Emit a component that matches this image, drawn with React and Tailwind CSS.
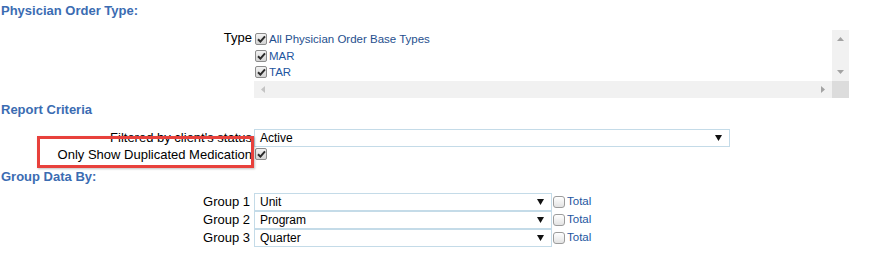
import React from "react";

function CheckBox({ checked }) {
  return checked ? (
    <span className="inline-flex h-[12px] w-[12px] shrink-0 items-center justify-center rounded-[2px] border border-[#8c8c8c] bg-gradient-to-b from-[#f2f2f2] to-[#d4d4d4]">
      <svg width="9" height="8" viewBox="0 0 9 8">
        <path d="M1 4.2 L3.4 6.6 L8 1.4" fill="none" stroke="#2b2b2b" strokeWidth="2" />
      </svg>
    </span>
  ) : (
    <span className="inline-block h-[12px] w-[12px] shrink-0 rounded-[3px] border border-[#9c9c9c] bg-gradient-to-b from-[#ffffff] to-[#e3e3e3]" />
  );
}

function Select({ value, width }) {
  return (
    <div
      className={`flex h-[18px] items-center justify-between border border-[#c4dbe8] bg-white pl-[5px] pr-[7px] text-[12px] text-black ${width}`}
    >
      <span>{value}</span>
      <svg width="7" height="6" viewBox="0 0 7 6">
        <path d="M0 0 H7 L3.5 6 Z" fill="#111" />
      </svg>
    </div>
  );
}

function Header({ children, className }) {
  return (
    <div className={`text-[13px] font-bold leading-4 text-[#3b6cb2] ${className}`}>{children}</div>
  );
}

export default function App() {
  return (
    <div
      className="relative h-[257px] w-[876px] overflow-hidden bg-white text-black"
      style={{ fontFamily: '"Liberation Sans", Arial, sans-serif' }}
    >
      <Header className="h-[30px] pl-[1px] pt-[3px]">Physician Order Type:</Header>

      <div className="flex">
        <div className="w-[254px] pr-[2px] text-right text-[13px] leading-4">Type</div>
        <div className="flex h-[68px] w-[595px] flex-col">
          <div className="flex flex-1">
            <div className="flex flex-1 flex-col pt-[1px] text-[11.5px] leading-[16.5px] text-[#1d56a0]">
              <div className="flex items-center gap-[2px] pl-[1px]">
                <CheckBox checked />
                <span className="text-[#1f4f8e]">All Physician Order Base Types</span>
              </div>
              <div className="flex items-center gap-[2px] pl-[1px]">
                <CheckBox checked />
                <span>MAR</span>
              </div>
              <div className="flex items-center gap-[2px] pl-[1px]">
                <CheckBox checked />
                <span>TAR</span>
              </div>
            </div>
            <div className="flex w-[17px] flex-col items-center justify-between bg-[#f1f1f1] py-[7px]">
              <svg width="7" height="4" viewBox="0 0 7 4">
                <path d="M0 4 L3.5 0 L7 4 Z" fill="#a3a3a3" />
              </svg>
              <svg width="7" height="4" viewBox="0 0 7 4">
                <path d="M0 0 L3.5 4 L7 0 Z" fill="#a3a3a3" />
              </svg>
            </div>
          </div>
          <div className="flex h-[17px]">
            <div className="flex flex-1 items-center justify-between bg-[#f1f1f1] px-[7px]">
              <svg width="4" height="7" viewBox="0 0 4 7">
                <path d="M4 0 L0 3.5 L4 7 Z" fill="#c4c4c4" />
              </svg>
              <svg width="4" height="7" viewBox="0 0 4 7">
                <path d="M0 0 L4 3.5 L0 7 Z" fill="#a3a3a3" />
              </svg>
            </div>
            <div className="w-[17px] bg-[#dcdcdc]" />
          </div>
        </div>
      </div>

      <Header className="h-[31px] pl-[1px] pt-[4px]">Report Criteria</Header>

      <div className="flex h-[18px] items-center">
        <div className="w-[254px] pr-[2px] text-right text-[13px] leading-4">Filtered by client's status</div>
        <Select value="Active" width="w-[476px]" />
      </div>
      <div className="flex h-[16px] items-start">
        <div className="w-[254px] pr-[2px] text-right text-[13px] leading-4">Only Show Duplicated Medication</div>
        <div className="flex pl-[1px] pt-[1px]">
          <CheckBox checked />
        </div>
      </div>

      <Header className="h-[30px] pl-[1px] pt-[6px]">Group Data By:</Header>

      {["Unit", "Program", "Quarter"].map((v, i) => (
        <div key={v} className="flex h-[18px] items-center">
          <div className="w-[254px] pr-[4px] text-right text-[13px] leading-4">Group {i + 1}</div>
          <Select value={v} width="w-[298px]" />
          <div className="flex items-center gap-[2px] pl-[1px] text-[11.5px] text-[#1d56a0]">
            <CheckBox />
            <span>Total</span>
          </div>
        </div>
      ))}

      <div className="pointer-events-none absolute left-[37px] top-[136px] h-[32px] w-[217px] border-[3px] border-[#e8413c] shadow-[1px_1px_2px_rgba(0,0,0,0.25)]" />
    </div>
  );
}
